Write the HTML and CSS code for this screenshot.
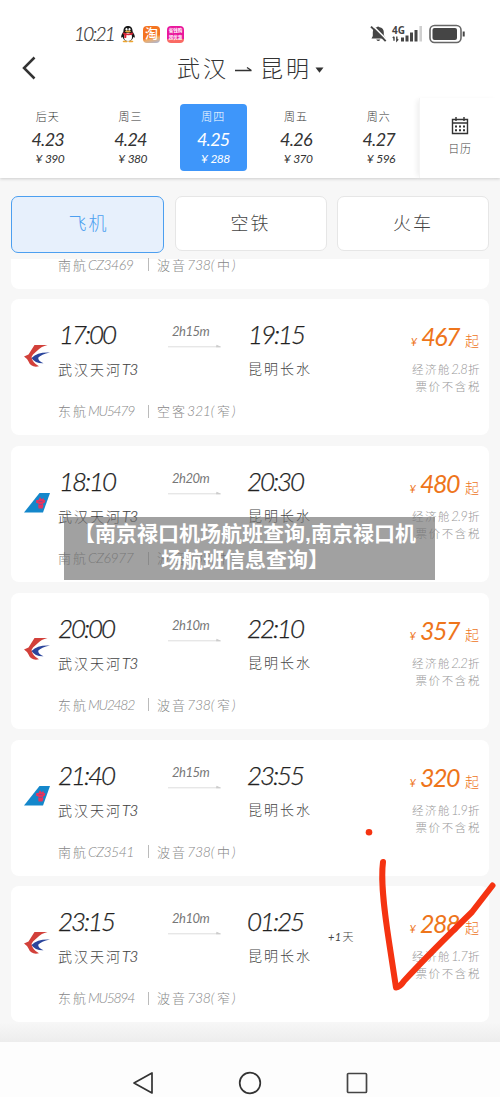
FILE: index.html
```html
<!DOCTYPE html>
<html lang="zh-CN">
<head>
<meta charset="utf-8">
<title>武汉 - 昆明</title>
<link rel="stylesheet" href="styles.css">
</head>
<body>
<svg class="defs" width="0" height="0">
  <symbol id="mu" viewBox="0 0 26 22">
    <path d="M10.500 0H23.500Q17 1.500 14 5L9 9.500 7.500 12Q8.500 18 15 21.300 7 23 4.500 16.500L3 14 0 11.500 4.500 9.500Z" fill="#d2403a"/>
    <path d="M26 7.600Q14 6.800 7.500 13 11 18.500 19.500 18.200 14 16 14.200 12.800 17 9.500 26 7.600Z" fill="#2b459c"/>
  </symbol>
  <symbol id="cz" viewBox="0 0 26 20">
    <path d="M15.500 0H26L19 19.500H0Z" fill="#1487cb"/>
    <path d="M16 4l1.300 2.300L19.500 5l.3 2 1.700.3-.8 2.500-2 1 .8 2-1 2.700h-4l-.3-2.700.5-2-2.700-1 .3-2.800 2.200.1Z" fill="#e5355f"/>
    <path d="M14.500 8.500h4M15 11.500h3" stroke="#7a4d96" stroke-width=".7"/>
  </symbol>
  <symbol id="line" viewBox="0 0 55 4">
    <path d="M1 2.800H53" stroke="#ddd"/><path d="M49.500.8L54 2.800V3.300H49Z" fill="#ccc"/>
  </symbol>
</svg>
<div class="phone">
  <header class="top">
    <div class="status">
      <span class="clock">10:21</span>
      <svg class="qq" width="16" height="18" viewBox="0 0 16 18">
        <path d="M8 1C4.800 1 3.400 3.200 3.400 6.500 2 9 .8 10.800 1.300 12.800L2.700 12Q3.500 16 8 16.300 12.500 16 13.300 12L14.700 12.800C15.200 10.800 14 9 12.600 6.500 12.600 3.200 11.200 1 8 1Z" fill="#171717"/>
        <ellipse cx="8" cy="12" rx="4" ry="4" fill="#fff"/><ellipse cx="6.500" cy="4.300" rx="1" ry="1.400" fill="#fff"/><ellipse cx="9.500" cy="4.300" rx="1" ry="1.400" fill="#fff"/>
        <ellipse cx="8" cy="6.500" rx="3" ry="1" fill="#efb044"/><path d="M3.400 7.300Q8 10 12.600 7.300L13 9.200Q10 10.500 6.500 10L6.200 13H4.300V9.600L3 9.200Z" fill="#de2636"/>
        <path d="M2.500 16.500Q4 14.800 7.500 16.300L7 17.200H3.500ZM8.500 16.300Q12 14.800 13.500 16.500L12.500 17.200H9Z" fill="#eda52f"/>
      </svg>
      <div class="app taobao">淘</div>
      <div class="app pink"><span>省钱购</span><span>超优惠</span></div>
      <svg class="bell" width="17" height="18" viewBox="0 0 17 18">
        <path d="M2.800 13V7Q3 3 6.800 2.300 8 .8 9.500 2.300 13.600 3 13.800 7V10L15.800 13.500H1.500L2.800 11ZM6.200 14.500H10.400Q8.300 17.600 6.200 14.500Z" fill="#454545"/>
        <path d="M2.300.2L17 14.900" stroke="#fff" stroke-width="1.500"/><path d="M1 1.600L15.700 16.200" stroke="#454545" stroke-width="1.900"/>
      </svg>
      <div class="net"><b>4G</b>
        <svg width="31" height="18" viewBox="0 0 31 18">
          <path d="M2 11.800V15.800M.8 13L2 11.800M4.800 11.500V15.800L6.200 14.300" stroke="#454545" stroke-width="1.400" fill="none"/>
          <path d="M10.500 12.500V16.500M15 10.500V16.500M19.500 7.500V16.500M24 5V16.500" stroke="#454545" stroke-width="3"/><path d="M28.700 1V16.500" stroke="#cfcfcf" stroke-width="2.600"/>
        </svg>
      </div>
      <svg class="battery" width="37" height="20" viewBox="0 0 37 20">
        <rect x="1" y="1.500" width="31" height="17" rx="4.500" fill="none" stroke="#666" stroke-width="1.600"/><rect x="3.500" y="4" width="24.500" height="12" rx="2" fill="#454545"/><path d="M34.700 7.500V12.500" stroke="#454545" stroke-width="2"/>
      </svg>
    </div>
    <div class="titlebar">
      <svg class="back" width="14" height="24" viewBox="0 0 14 24"><path d="M12.500 1.500L2 12 12.500 22.500" fill="none" stroke="#333" stroke-width="2.500"/></svg>
      <h1><span>武汉</span><svg width="18" height="8" viewBox="0 0 18 8"><path d="M1 5.500H17.500M13 2.500L17.500 5.500" stroke="#333" stroke-width="1.300" fill="none"/></svg><span>昆明</span><svg class="caret" width="9" height="6" viewBox="0 0 9 6"><path d="M.5.500H8.500L4.500 5.700Z" fill="#333"/></svg></h1>
    </div>
    <nav class="dates">
      <div class="day"><i>后天</i><b>4.23</b><small>¥ 390</small></div>
      <div class="day"><i>周三</i><b>4.24</b><small>¥ 380</small></div>
      <div class="day on"><i>周四</i><b>4.25</b><small>¥ 288</small></div>
      <div class="day"><i>周五</i><b>4.26</b><small>¥ 370</small></div>
      <div class="day"><i>周六</i><b>4.27</b><small>¥ 596</small></div>
      <div class="calendar">
        <svg width="18" height="19" viewBox="0 0 18 19"><path d="M1.500 3.500H16.500V17.500H1.500ZM1.500 7H16.500M5 1V5M13 1V5" stroke="#333" stroke-width="1.400" fill="none"/><path d="M4 10.500H14M4 14.300H14" stroke="#333" stroke-width="2" stroke-dasharray="2 2"/></svg>
        <span>日历</span>
      </div>
    </nav>
  </header>
  <div class="tabs"><div class="tab active">飞机</div><div class="tab">空铁</div><div class="tab">火车</div></div>
  <main class="list">
    <article class="card partial"><div class="meta"><span>南航<em>CZ3469</em></span><s></s><span>波音<em>738(</em>中<em>)</em></span></div></article>

    <article class="card">
      <svg class="logo" width="26" height="22"><use href="#mu"/></svg>
      <time class="dep one">17:00</time><div class="from">武汉天河<em>T3</em></div>
      <div class="span"><em>2h15m</em><svg width="55" height="4"><use href="#line"/></svg></div>
      <time class="arr one">19:15</time><div class="to">昆明长水</div>
      <div class="price"><small>¥</small><b>467</b><span>起</span></div>
      <div class="note">经济舱<em>2.8</em>折<br>票价不含税</div>
      <div class="meta mu"><span>东航<em>MU5479</em></span><s></s><span>空客<em>321(</em>窄<em>)</em></span></div>
    </article>

    <article class="card">
      <svg class="logo" width="26" height="20"><use href="#cz"/></svg>
      <time class="dep one">18:10</time><div class="from">武汉天河<em>T3</em></div>
      <div class="span"><em>2h20m</em><svg width="55" height="4"><use href="#line"/></svg></div>
      <time class="arr">20:30</time><div class="to">昆明长水</div>
      <div class="price"><small>¥</small><b>480</b><span>起</span></div>
      <div class="note">经济舱<em>2.9</em>折<br>票价不含税</div>
      <div class="meta"><span>南航<em>CZ6977</em></span><s></s><span>波音<em>738(</em>中<em>)</em></span></div>
    </article>

    <article class="card">
      <svg class="logo" width="26" height="22"><use href="#mu"/></svg>
      <time class="dep">20:00</time><div class="from">武汉天河<em>T3</em></div>
      <div class="span"><em>2h10m</em><svg width="55" height="4"><use href="#line"/></svg></div>
      <time class="arr">22:10</time><div class="to">昆明长水</div>
      <div class="price"><small>¥</small><b>357</b><span>起</span></div>
      <div class="note">经济舱<em>2.2</em>折<br>票价不含税</div>
      <div class="meta mu"><span>东航<em>MU2482</em></span><s></s><span>波音<em>738(</em>窄<em>)</em></span></div>
    </article>

    <article class="card">
      <svg class="logo" width="26" height="20"><use href="#cz"/></svg>
      <time class="dep">21:40</time><div class="from">武汉天河<em>T3</em></div>
      <div class="span"><em>2h15m</em><svg width="55" height="4"><use href="#line"/></svg></div>
      <time class="arr">23:55</time><div class="to">昆明长水</div>
      <div class="price"><small>¥</small><b>320</b><span>起</span></div>
      <div class="note">经济舱<em>1.9</em>折<br>票价不含税</div>
      <div class="meta"><span>南航<em>CZ3541</em></span><s></s><span>波音<em>738(</em>中<em>)</em></span></div>
    </article>

    <article class="card">
      <svg class="logo" width="26" height="22"><use href="#mu"/></svg>
      <time class="dep">23:15</time><div class="from">武汉天河<em>T3</em></div>
      <div class="span"><em>2h10m</em><svg width="55" height="4"><use href="#line"/></svg></div>
      <time class="arr">01:25</time><div class="to">昆明长水</div>
      <div class="plus"><em>+1</em>天</div>
      <div class="price"><small>¥</small><b>288</b><span>起</span></div>
      <div class="note">经济舱<em>1.7</em>折<br>票价不含税</div>
      <div class="meta mu"><span>东航<em>MU5894</em></span><s></s><span>波音<em>738(</em>窄<em>)</em></span></div>
    </article>
  </main>
  <footer class="keys">
    <svg width="22" height="24" viewBox="0 0 22 24"><path d="M2 12L20 2V22Z" fill="none" stroke="#333" stroke-width="1.700" stroke-linejoin="round"/></svg>
    <svg width="24" height="24" viewBox="0 0 24 24"><circle cx="12" cy="12" r="10.300" fill="none" stroke="#333" stroke-width="1.700"/></svg>
    <svg width="22" height="24" viewBox="0 0 22 24"><rect x="1.500" y="2.500" width="19" height="19" rx="1" fill="none" stroke="#444" stroke-width="1.700"/></svg>
  </footer>
  <div class="caption"><span>【南京禄口机场航班查询,南京禄口机</span><span>场航班信息查询】</span></div>
  <svg class="ink" width="140" height="175" viewBox="360 825 140 175">
    <circle cx="369" cy="832.300" r="3.300" fill="#f53311"/>
    <path d="M383 862C380 884 386 922 389.500 945Q394 975 396 987.500 400 987 404 981 430 953 472 912L492.500 885.500" fill="none" stroke="#f53311" stroke-width="6" stroke-linecap="round" stroke-linejoin="round"/>
  </svg>
</div>
</body>
</html>
```
FILE: styles.css
```css
* { box-sizing: border-box; }
body { margin: 0; background: #f7f7f7; font-family: Lato, "Noto Sans CJK SC", sans-serif; font-weight: 300; color: #444; }
svg { display: block; flex: none; }
.defs { position: absolute; }
.phone { position: relative; width: 500px; height: 1097px; display: flex; flex-direction: column; overflow: hidden; }
em { font-style: italic; font-weight: 400; letter-spacing: 0; }
h1 { margin: 0; font-weight: 300; }

.top { height: 178px; background: #fff; box-shadow: 0 1px 3px #ccc; display: flex; flex-direction: column; z-index: 1; }
.status { height: 48px; padding: 20px 0 0 74px; display: flex; align-items: center; }
.clock { width: 46px; font-size: 19px; font-style: italic; font-weight: 300; letter-spacing: -1.700px; line-height: 28px; color: #333; -webkit-text-stroke: .2px #333; }
.app { width: 17px; height: 17px; border-radius: 4px; color: #fff; text-align: center; overflow: hidden; }
.taobao { margin-left: 7px; background: linear-gradient(165deg, #f47421 60%, #efad69 72%, #a3b8e3); font-size: 13px; line-height: 14px; font-weight: 500; }
.pink { margin-left: 7px; background: linear-gradient(#e9179c 75%, #fa6a64 80%); font-size: 4.500px; line-height: 7px; font-weight: 700; padding-top: 1px; display: flex; flex-direction: column; }
.bell { margin-left: 186px; }
.net { width: 31px; height: 18px; margin-left: 5px; display: grid; }
.net > * { grid-area: 1 / 1; }
.net b { font: 700 10px/10px "Open Sans", sans-serif; color: #454545; }
.battery { margin-left: 6px; }
.titlebar { height: 50px; padding: 0 0 11px 22px; display: flex; align-items: center; }
.titlebar h1 { margin-left: 141px; display: flex; align-items: center; font-size: 23px; line-height: 38px; letter-spacing: 3px; color: #333; }
.titlebar h1 svg { margin: 3px 8px 0 5px; }
.titlebar h1 .caret { margin: 4px 0 0 3px; }

.dates { height: 80px; padding-left: 14.500px; display: flex; align-items: flex-start; }
.day { width: 66.500px; height: 67px; margin: 6px 16.250px 0 0; border-radius: 4px; display: flex; flex-direction: column; align-items: center; color: #333; }
.day i { font-size: 11px; line-height: 14px; letter-spacing: 1px; font-style: normal; margin-top: 6px; }
.day b { font-size: 18px; line-height: 24px; margin-top: 3px; font-weight: 400; font-style: italic; letter-spacing: -.7px; }
.day small { font-size: 12px; line-height: 16px; font-weight: 400; font-style: italic; letter-spacing: -.6px; word-spacing: 1px; padding-left: 4px; }
.day.on { background: #3e96fa; color: #fff; }
.calendar { margin-left: -9px; flex: 1; height: 80px; padding: 18px 0 0 0; border-left: 1px solid #f5f5f5; box-shadow: -4px 0 5px -2px #eee; display: flex; flex-direction: column; align-items: center; font-size: 11px; line-height: 16px; letter-spacing: 1px; }
.calendar span { margin-top: 6px; }

.tabs { padding: 18px 11px 0; height: 81px; display: grid; grid-template-columns: 153px 152px 152px; column-gap: 10.500px; align-items: start; }
.tab { height: 55px; border: 1px solid #e6e6e6; border-radius: 7px; background: #fff; text-align: center; font-size: 18px; line-height: 53px; letter-spacing: 2px; }
.tab.active { height: 57px; border: 1.500px solid #4c9ff0; background: #e7f0fc; color: #4c9ff0; padding-left: 2px; }

.list { height: 783px; padding: 0 11px; display: flex; flex-direction: column; gap: 10.750px; background: linear-gradient(#f7f7f7 97.500%, #ededed); }
.card { flex: none; height: 136px; border-radius: 8px; background: #fff; display: grid; grid-template-columns: 13px 34px 106px 83px 78px 60px 104px; grid-template-rows: 21px 30px 9px 20px 22px 20px; }
.card.partial { height: 29.500px; border-radius: 0 0 8px 8px; grid-template-rows: 11px 18px; }
.card.partial .meta { grid-row: 1; }
.logo { grid-area: 2 / 2 / 5 / 3; align-self: center; margin-top: 12px; }
time { grid-row: 2; margin-top: -1px; font-size: 26px; line-height: 30px; font-style: italic; font-weight: 300; letter-spacing: -2.100px; color: #222; -webkit-text-stroke: .25px #222; }
.dep { grid-column: 3; }
.arr { grid-column: 5; }
.one { padding-left: 1px; }
.from, .to { grid-row: 4; font-size: 14px; line-height: 20px; letter-spacing: 2px; white-space: nowrap; }
.from { grid-column: 3; }
.to { grid-column: 5; padding-left: 1px; }
.from em { font-size: 15px; font-weight: 300; letter-spacing: -.5px; -webkit-text-stroke: .2px #444; }
.span { grid-area: 2 / 4 / 4 / 5; padding: 1px 0 0 3px; font-size: 13px; line-height: 20px; color: #777; }
.span em { padding-left: 5px; letter-spacing: -.5px; }
.span svg { margin-top: 3px; }
.price { grid-area: 2 / 6 / 3 / 8; justify-self: end; padding-right: 10px; display: flex; align-items: baseline; color: #ee751b; line-height: 32px; }
.price small { font-size: 11px; font-style: italic; margin-right: 4px; font-weight: 400; }
.price b { font-size: 25px; font-weight: 400; font-style: italic; letter-spacing: -1.500px; margin-right: 6px; }
.price span { font-size: 14px; }
.note { grid-area: 4 / 6 / 6 / 8; justify-self: end; text-align: right; padding: 2px 8px 0 0; font-size: 11.500px; line-height: 17px; letter-spacing: 1.600px; color: #999; white-space: nowrap; }
.note em { font-size: 13px; font-weight: 300; letter-spacing: -.8px; margin-right: 1px; }
.meta { grid-area: 6 / 3 / 7 / 7; display: flex; align-items: center; font-size: 13px; line-height: 20px; letter-spacing: 2px; color: #888; }
.meta > span:first-child { width: 90px; }
.meta em { font-size: 14px; font-weight: 300; letter-spacing: -.5px; }
.meta.mu > span:first-child em { letter-spacing: -1.300px; }
.meta s { width: 1px; height: 13px; margin-right: 8px; background: #bbb; }
.meta span:last-child em:first-child { letter-spacing: -.2px; margin-right: 3px; }
.plus { grid-area: 2 / 6 / 5 / 7; padding: 21px 0 0 3px; font-size: 11px; line-height: 18px; }
.plus em { letter-spacing: .3px; margin-right: 1px; }

.keys { height: 55px; background: #fdfdfd; display: flex; justify-content: center; gap: 84px; padding-top: 29px; }
.caption { position: absolute; left: 64px; top: 517px; width: 371px; height: 63px; padding: 4px 9px 0 0; background: rgba(112, 112, 112, .66); color: #fff; font: 700 21px/26px "Liberation Sans", "Noto Sans CJK SC", sans-serif; display: flex; flex-direction: column; align-items: center; white-space: nowrap; z-index: 2; }
.ink { position: absolute; left: 360px; top: 825px; z-index: 2; }
```
